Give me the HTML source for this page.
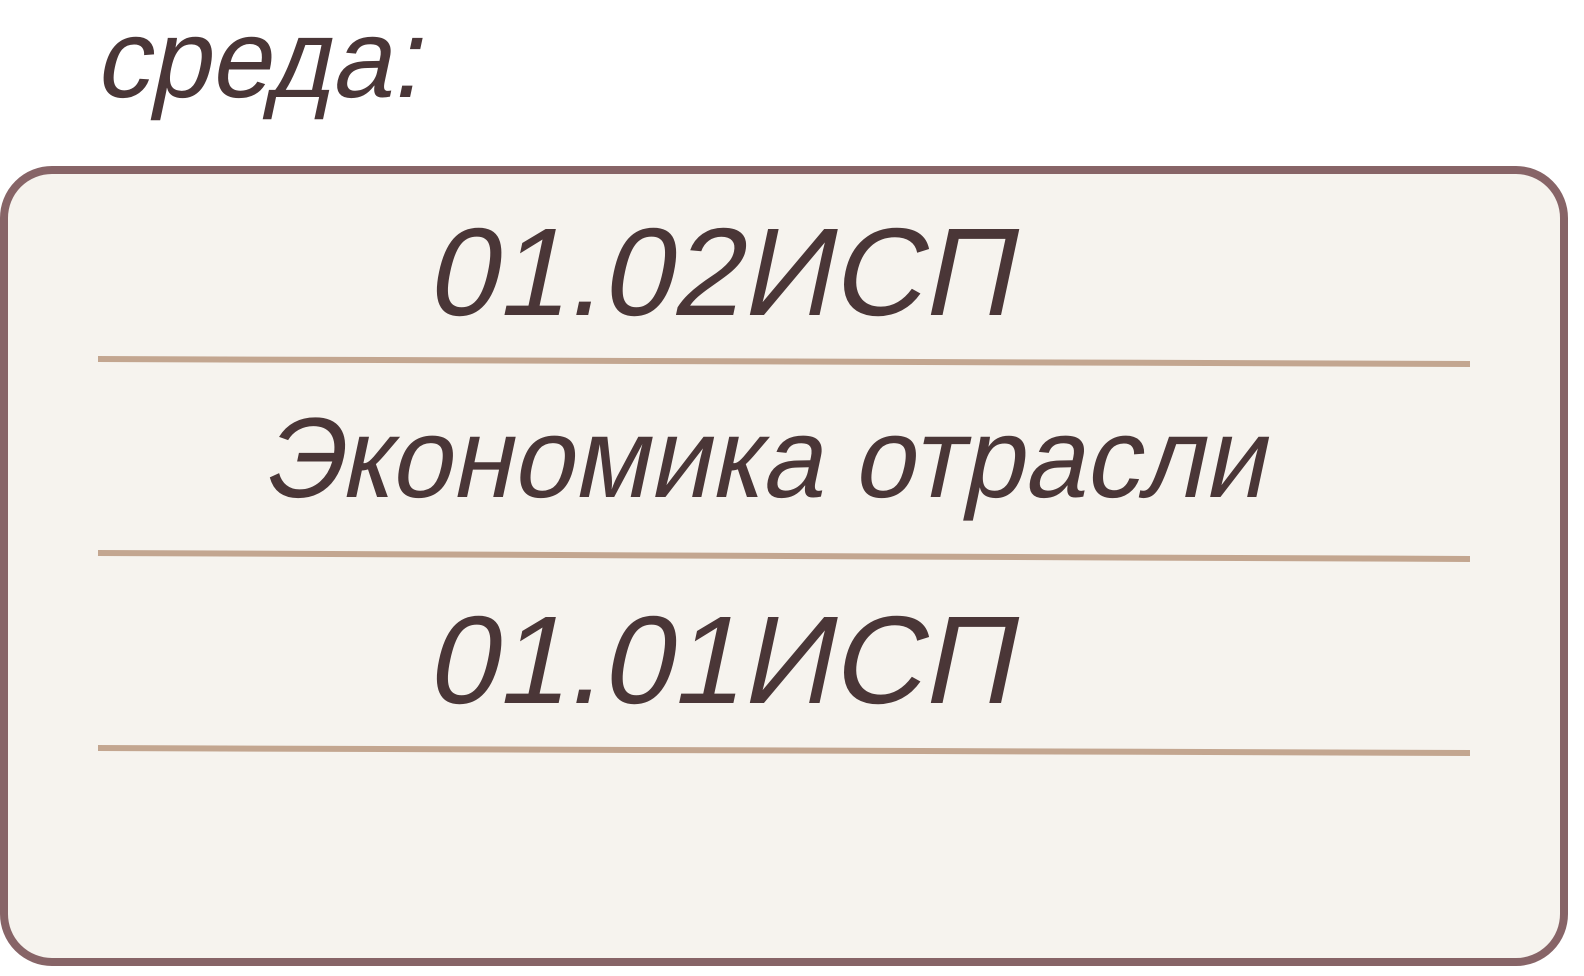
<!DOCTYPE html>
<html><head><meta charset="utf-8"><style>
html,body{margin:0;padding:0;background:#fff;width:1584px;height:976px;overflow:hidden}
svg{display:block}
text{font-family:"Liberation Sans","DejaVu Sans",sans-serif;font-style:normal;fill:#4a3637}
</style></head><body>
<svg width="1584" height="976" viewBox="0 0 1584 976" xmlns="http://www.w3.org/2000/svg">
<rect x="0" y="0" width="1584" height="976" fill="#fff"/>
<text transform="translate(94,97) skewX(-12)" x="0" y="0" font-size="112" textLength="326" lengthAdjust="spacingAndGlyphs">среда:</text>
<rect x="4" y="170" width="1560" height="792" rx="48" ry="48" fill="#f6f3ee" stroke="#876467" stroke-width="8"/>
<line x1="98" y1="359" x2="1470" y2="364" stroke="#c3a690" stroke-width="6"/>
<line x1="98" y1="553" x2="1470" y2="559" stroke="#c3a690" stroke-width="6"/>
<line x1="98" y1="748" x2="1470" y2="753" stroke="#c3a690" stroke-width="6"/>
<text transform="translate(425,315) skewX(-12)" x="0" y="0" font-size="125" textLength="586" lengthAdjust="spacingAndGlyphs">01.02ИСП</text>
<text transform="translate(260,497) skewX(-12)" x="0" y="0" font-size="114" textLength="1004" lengthAdjust="spacingAndGlyphs">Экономика отрасли</text>
<text transform="translate(425,703) skewX(-12)" x="0" y="0" font-size="125" textLength="586" lengthAdjust="spacingAndGlyphs">01.01ИСП</text>
</svg>
</body></html>
